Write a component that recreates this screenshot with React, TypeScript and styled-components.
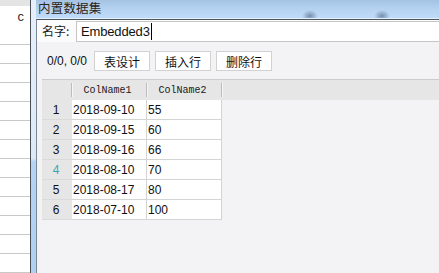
import React from "react";
import styled, { createGlobalStyle } from "styled-components";

const Global = createGlobalStyle`
  html, body { margin: 0; padding: 0; background: #ffffff; overflow: hidden; }
  * { box-sizing: border-box; }
`;

const Screen = styled.div`
  display: flex;
  width: 439px;
  height: 273px;
  overflow: hidden;
  font-family: "Liberation Sans", "Noto Sans CJK SC", sans-serif;
  font-size: 12px;
  color: #111;
`;

const LeftPane = styled.div`
  width: 30px;
  display: flex;
  flex-direction: column;
  background: #fff;
`;

const LeftBand = styled.div`
  height: 7px;
  background: #e4e4e4;
`;

const LeftRow = styled.div<{ $h: number }>`
  height: ${(p) => p.$h}px;
  flex: none;
  border-bottom: 1px solid #c8c8c8;
  display: flex;
  justify-content: flex-end;
  align-items: flex-start;
  padding: 5px 6px 0 0;
  font-family: "Liberation Mono", monospace;
  font-size: 11px;
  line-height: 14px;
  color: #111;
`;

const Divider = styled.div`
  width: 1px;
  background: #4a4e55;
`;

const Frame = styled.div`
  width: 5px;
  background: linear-gradient(to bottom, #e6eff9 0px, #dde9f7 158px, #b3d3f4 162px, #aed0f3 273px);
`;

const Main = styled.div`
  flex: 1;
  display: flex;
  flex-direction: column;
  min-width: 0;
`;

const TitleBar = styled.div`
  height: 19px;
  flex: none;
  border-bottom: 1px solid #e4f0fc;
  background:
    radial-gradient(ellipse 8px 6px at 274px 16px, rgba(70, 90, 120, 0.6), rgba(70, 90, 120, 0) 100%),
    radial-gradient(ellipse 8px 6px at 346px 16px, rgba(70, 90, 120, 0.6), rgba(70, 90, 120, 0) 100%),
    linear-gradient(to bottom, #a4c2e2 0%, #b6d4f2 55%, #bedcfa 100%);
  padding-left: 2px;
`;

const Title = styled.div`
  font-family: "Noto Sans CJK SC", sans-serif;
  font-size: 12.5px;
  line-height: 16px;
  letter-spacing: 0.2px;
  color: #2e2418;
`;

const Panel = styled.div`
  flex: 1;
  display: flex;
  flex-direction: column;
  border-top: 1px solid #4e5662;
  border-left: 1px solid #7d8896;
  background: #f3f3f5;
  min-height: 0;
`;

const NameRow = styled.div`
  height: 22px;
  flex: none;
  display: flex;
  align-items: flex-start;
  background: #fbfbfb;
  padding-left: 5px;
`;

const NameLabel = styled.div`
  width: 34px;
  padding-top: 3px;
  font-family: "Noto Sans CJK SC", sans-serif;
  font-size: 12px;
  line-height: 16px;
  color: #1a1a1a;
`;

const NameInput = styled.div`
  flex: 1;
  height: 21px;
  margin-top: 1px;
  border: 1px solid #c6c6c6;
  border-right: none;
  background: #fff;
  display: flex;
  align-items: center;
  padding-left: 4px;
  font-family: "Liberation Sans", sans-serif;
  font-size: 13px;
  letter-spacing: -0.15px;
  color: #111;
`;

const Caret = styled.span`
  display: inline-block;
  width: 1px;
  height: 17px;
  background: #000;
  margin-left: 1px;
`;

const Toolbar = styled.div`
  height: 37px;
  flex: none;
  display: flex;
  align-items: flex-start;
  padding: 9px 0 0 10px;
  gap: 5px;
`;

const Counter = styled.div`
  width: 42px;
  height: 20px;
  line-height: 20px;
  font-size: 12px;
  color: #111;
`;

const Button = styled.div`
  width: 56px;
  height: 20px;
  border: 1px solid #d2d2d2;
  background: #fff;
  display: flex;
  align-items: center;
  justify-content: center;
  font-family: "Noto Sans CJK SC", sans-serif;
  font-size: 12px;
  color: #111;
`;

const Grid = styled.div`
  flex: 1;
  margin-left: 5px;
  border-top: 1px solid #cbcbcb;
  background: #f3f3f5;
  display: flex;
  flex-direction: column;
`;

const HeaderRow = styled.div`
  height: 20px;
  flex: none;
  display: flex;
  background: #e6e6e6;
`;

const HeaderCell = styled.div<{ $w: number }>`
  position: relative;
  width: ${(p) => p.$w}px;
  display: flex;
  align-items: center;
  justify-content: center;
  padding-right: 4px;
  font-family: "Liberation Mono", monospace;
  font-size: 10px;
  color: #1a1a1a;
  &::after {
    content: "";
    position: absolute;
    right: 0;
    top: 3px;
    bottom: 3px;
    width: 1px;
    background: #bcbcbc;
    box-shadow: 1px 0 0 #f6f6f6;
  }
`;

const DataRow = styled.div`
  height: 20px;
  flex: none;
  display: flex;
`;

const RowNum = styled.div<{ $accent?: boolean }>`
  width: 30px;
  background: #e6e6e6;
  border-bottom: 1px solid #dadada;
  display: flex;
  align-items: center;
  justify-content: center;
  padding-right: 2px;
  font-size: 12px;
  color: ${(p) => (p.$accent ? "#3aa6b4" : "#111")};
`;

const Cell = styled.div<{ $w: number }>`
  width: ${(p) => p.$w}px;
  background: #fff;
  border-right: 1px solid #d4d4d4;
  border-bottom: 1px solid #d4d4d4;
  display: flex;
  align-items: center;
  padding-left: 1px;
  font-size: 12px;
  color: #101010;
`;

const rows: [string, string][] = [
  ["2018-09-10", "55"],
  ["2018-09-15", "60"],
  ["2018-09-16", "66"],
  ["2018-08-10", "70"],
  ["2018-08-17", "80"],
  ["2018-07-10", "100"],
];

export default function App() {
  return (
    <>
      <Global />
      <Screen>
        <LeftPane>
          <LeftBand />
          <LeftRow $h={39}>C</LeftRow>
          {Array.from({ length: 12 }).map((_, i) => (
            <LeftRow key={i} $h={19} />
          ))}
        </LeftPane>
        <Divider />
        <Frame />
        <Main>
          <TitleBar>
            <Title>内置数据集</Title>
          </TitleBar>
          <Panel>
            <NameRow>
              <NameLabel>名字:</NameLabel>
              <NameInput>
                Embedded3
                <Caret />
              </NameInput>
            </NameRow>
            <Toolbar>
              <Counter>0/0, 0/0</Counter>
              <Button>表设计</Button>
              <Button>插入行</Button>
              <Button>删除行</Button>
            </Toolbar>
            <Grid>
              <HeaderRow>
                <HeaderCell $w={30} />
                <HeaderCell $w={75}>ColName1</HeaderCell>
                <HeaderCell $w={75}>ColName2</HeaderCell>
              </HeaderRow>
              {rows.map(([d, v], i) => (
                <DataRow key={i}>
                  <RowNum $accent={i === 3}>{i + 1}</RowNum>
                  <Cell $w={75}>{d}</Cell>
                  <Cell $w={75}>{v}</Cell>
                </DataRow>
              ))}
            </Grid>
          </Panel>
        </Main>
      </Screen>
    </>
  );
}
